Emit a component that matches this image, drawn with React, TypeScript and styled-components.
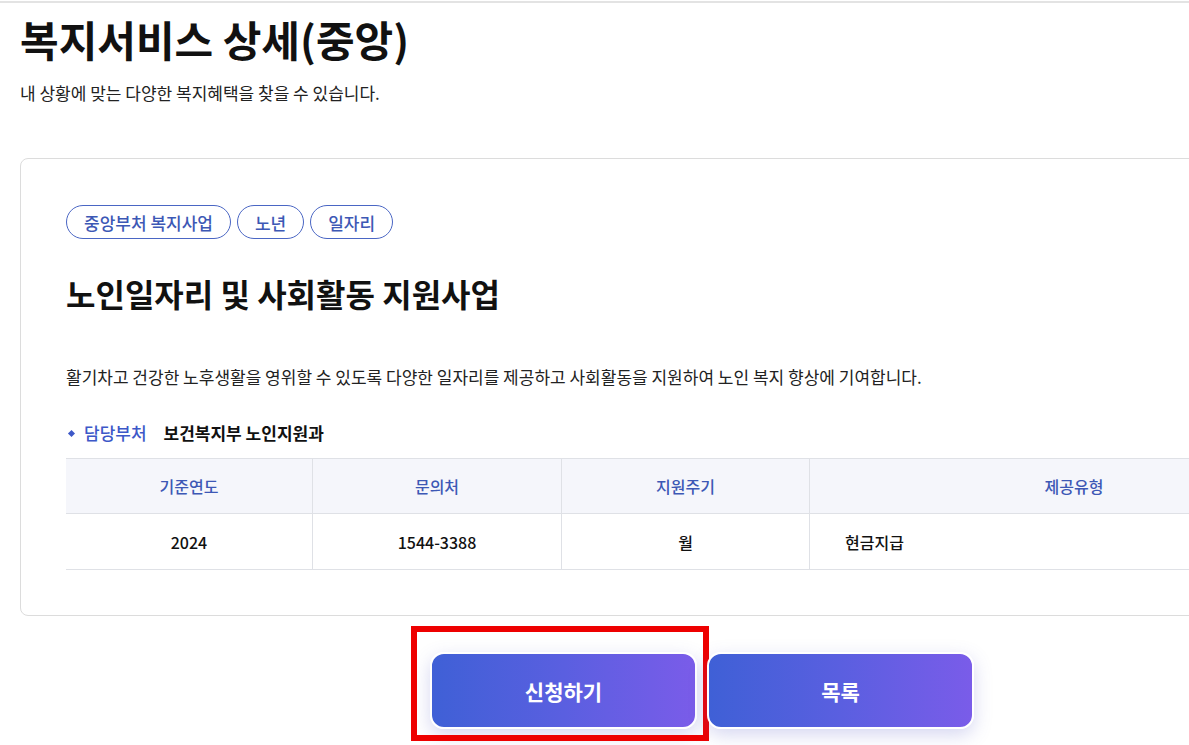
import React from 'react';
import styled, { createGlobalStyle } from 'styled-components';

const GlobalStyle = createGlobalStyle`
  html, body {
    margin: 0;
    padding: 0;
    overflow: hidden;
    background: #fff;
  }
  body {
    font-family: "Noto Sans CJK KR", "Noto Sans", sans-serif;
    color: #111;
  }
`;

const Page = styled.div`
  width: 1364px;
  padding: 0 20px 40px;
  border-top: 2px solid #e3e3e3;
  margin-top: 1px;
`;

const PageTitle = styled.h1`
  margin: 8px 0 0;
  font-size: 42px;
  font-weight: 700;
  line-height: 56px;
  color: #111;
`;

const PageDesc = styled.p`
  margin: 14px 0 0;
  font-size: 17px;
  line-height: 24px;
  color: #222;
`;

const Card = styled.section`
  margin-top: 53px;
  border: 1px solid #dcdcdc;
  border-radius: 8px;
  padding: 46px 45px 45px;
`;

const TagList = styled.div`
  display: flex;
  gap: 6px;
`;

const Tag = styled.span`
  display: inline-flex;
  align-items: center;
  height: 34px;
  box-sizing: border-box;
  padding: 0 17px;
  border: 1px solid #4a66c4;
  border-radius: 17px;
  font-size: 17px;
  font-weight: 500;
  color: #3d58b5;
`;

const ServiceTitle = styled.h2`
  margin: 32px 0 0;
  font-size: 32px;
  font-weight: 700;
  line-height: 44px;
  color: #111;
`;

const ServiceDesc = styled.p`
  margin: 50px 0 0;
  font-size: 17px;
  line-height: 24px;
  color: #222;
`;

const InfoRow = styled.div`
  display: flex;
  align-items: center;
  margin-top: 32px;
  font-size: 17px;
  line-height: 24px;
`;

const Diamond = styled.span`
  width: 5px;
  height: 5px;
  background: #3d58c8;
  transform: rotate(45deg);
  margin: 0 10px 0 3px;
`;

const InfoLabel = styled.span`
  color: #3d58c8;
  font-weight: 500;
  margin-right: 17px;
`;

const InfoValue = styled.span`
  color: #111;
  font-weight: 700;
`;

const Table = styled.table`
  margin-top: 13px;
  width: 100%;
  border-collapse: collapse;
  table-layout: fixed;
  border-top: 1px solid #dfe1e6;
  border-bottom: 1px solid #dfe1e6;
`;

const Th = styled.th<{ $w?: number }>`
  width: ${({ $w }) => ($w ? `${$w}px` : 'auto')};
  height: 54px;
  padding: 0;
  background: #f5f6fb;
  color: #3d58b5;
  font-size: 16px;
  font-weight: 500;
  text-align: center;
  border-left: 1px solid #dfe1e6;
  &:first-child {
    border-left: none;
  }
`;

const Td = styled.td<{ $left?: boolean }>`
  height: 55px;
  font-size: 16px;
  font-weight: 500;
  color: #111;
  text-align: ${({ $left }) => ($left ? 'left' : 'center')};
  padding: ${({ $left }) => ($left ? '0 0 0 35px' : '0')};
  border-top: 1px solid #dfe1e6;
  border-left: 1px solid #dfe1e6;
  &:first-child {
    border-left: none;
  }
`;

const ButtonBar = styled.div`
  display: flex;
  justify-content: center;
  gap: 10px;
  margin-top: 36px;
`;

const ButtonWrap = styled.div`
  position: relative;
`;

const Highlight = styled.div`
  position: absolute;
  left: -19px;
  top: -26px;
  width: 298px;
  height: 115px;
  box-sizing: border-box;
  border: 6px solid #ee0000;
  pointer-events: none;
`;

const ActionButton = styled.button`
  width: 267px;
  height: 77px;
  box-sizing: border-box;
  border: 2px solid #fff;
  border-radius: 14px;
  background: linear-gradient(90deg, #3f60d6 0%, #5a5fe0 50%, #7a5ce9 100%);
  box-shadow: 0 6px 18px rgba(90, 96, 200, 0.25);
  color: #fff;
  font-family: inherit;
  font-size: 21px;
  font-weight: 700;
  cursor: pointer;
`;

export default function App() {
  return (
    <>
      <GlobalStyle />
      <Page>
        <PageTitle>복지서비스 상세(중앙)</PageTitle>
        <PageDesc>내 상황에 맞는 다양한 복지혜택을 찾을 수 있습니다.</PageDesc>
        <Card>
          <TagList>
            <Tag>중앙부처 복지사업</Tag>
            <Tag>노년</Tag>
            <Tag>일자리</Tag>
          </TagList>
          <ServiceTitle>노인일자리 및 사회활동 지원사업</ServiceTitle>
          <ServiceDesc>
            활기차고 건강한 노후생활을 영위할 수 있도록 다양한 일자리를 제공하고 사회활동을 지원하여 노인 복지 향상에 기여합니다.
          </ServiceDesc>
          <InfoRow>
            <Diamond />
            <InfoLabel>담당부처</InfoLabel>
            <InfoValue>보건복지부 노인지원과</InfoValue>
          </InfoRow>
          <Table>
            <thead>
              <tr>
                <Th $w={246}>기준연도</Th>
                <Th $w={248}>문의처</Th>
                <Th $w={247}>지원주기</Th>
                <Th>제공유형</Th>
              </tr>
            </thead>
            <tbody>
              <tr>
                <Td>2024</Td>
                <Td>1544-3388</Td>
                <Td>월</Td>
                <Td $left>현금지급</Td>
              </tr>
            </tbody>
          </Table>
        </Card>
        <ButtonBar>
          <ButtonWrap>
            <ActionButton>신청하기</ActionButton>
            <Highlight />
          </ButtonWrap>
          <ButtonWrap>
            <ActionButton>목록</ActionButton>
          </ButtonWrap>
        </ButtonBar>
      </Page>
    </>
  );
}
